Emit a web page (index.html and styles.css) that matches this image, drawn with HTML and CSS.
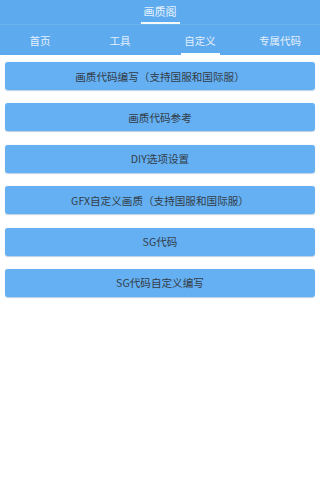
FILE: index.html
```html
<!DOCTYPE html>
<html lang="zh">
<head>
<meta charset="utf-8">
<link rel="stylesheet" href="styles.css">
</head>
<body>
<div class="app">
  <header class="topbar">
    <div class="title-wrap"><span class="title">画质阁</span></div>
    <nav class="tabs">
      <div class="tab">首页</div>
      <div class="tab">工具</div>
      <div class="tab active">自定义</div>
      <div class="tab">专属代码</div>
    </nav>
  </header>
  <main class="list">
    <div class="btn">画质代码编写（支持国服和国际服）</div>
    <div class="btn">画质代码参考</div>
    <div class="btn">DIY选项设置</div>
    <div class="btn">GFX自定义画质（支持国服和国际服）</div>
    <div class="btn">SG代码</div>
    <div class="btn">SG代码自定义编写</div>
  </main>
</div>
</body>
</html>
```

FILE: styles.css
```css
* { box-sizing: border-box; }
html, body {
  margin: 0;
  padding: 0;
  background: #ffffff;
  font-family: "Noto Sans CJK SC", "Liberation Sans", sans-serif;
}
.app {
  width: 100%;
  min-height: 500px;
  background: #ffffff;
}
.topbar {
  background: #5eaaee;
}
.title-wrap {
  height: 25px;
  display: flex;
  justify-content: center;
  border-bottom: 1px solid #6cb3f0;
}
.title {
  display: block;
  width: 39px;
  text-align: center;
  font-size: 11px;
  line-height: 22px;
  color: #e8f3fd;
  border-bottom: 2px solid #f4f9fe;
  height: 24px;
}
.tabs {
  display: grid;
  grid-template-columns: repeat(4, 1fr);
  height: 30px;
}
.tab {
  display: flex;
  align-items: center;
  justify-content: center;
  font-size: 10.5px;
  color: #e4f0fc;
  padding-top: 1px;
}
.tab.active {
  position: relative;
}
.tab.active::after {
  content: "";
  position: absolute;
  left: 50%;
  bottom: 0;
  width: 39px;
  margin-left: -19px;
  height: 2px;
  background: #ffffff;
}
.list {
  display: flex;
  flex-direction: column;
  gap: 13.4px;
  padding: 7px 5px 0 5px;
}
.btn {
  height: 28px;
  background: #64b0f3;
  border-radius: 3px;
  box-shadow: 0 0.5px 1px rgba(60, 120, 180, 0.35);
  display: flex;
  align-items: center;
  justify-content: center;
  font-size: 10.6px;
  color: #333c46;
}
```
